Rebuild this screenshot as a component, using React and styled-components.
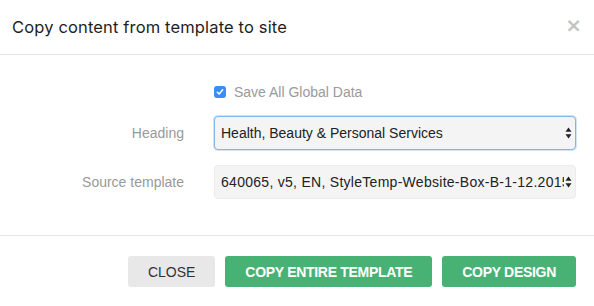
import React from 'react'
import styled, { createGlobalStyle } from 'styled-components'

const GlobalStyle = createGlobalStyle`
  html, body {
    margin: 0;
    padding: 0;
    background: #fff;
  }
  * { box-sizing: border-box; }
`;

const ArrowIcon = () => (
    <svg width="7" height="12" viewBox="0 0 7 12">
        <path d="M3.5 0.5 L6.5 4.8 L0.5 4.8 Z" fill="#222" />
        <path d="M3.5 11.5 L6.5 7.2 L0.5 7.2 Z" fill="#222" />
    </svg>
);

const CheckIcon = () => (
    <svg width="8" height="8" viewBox="0 0 8 8">
        <path d="M1.3 4.2 L3.2 6 L6.7 1.8" stroke="#fff" strokeWidth="1.5" fill="none" strokeLinecap="round" strokeLinejoin="round" />
    </svg>
);

const App = () => {
    return (
        <Modal>
            <GlobalStyle />
            <Header>
                <Title>Copy content from template to site</Title>
                <CloseX>×</CloseX>
            </Header>
            <Body>
                <Row>
                    <span />
                    <CheckRow>
                        <CheckBox><CheckIcon /></CheckBox>
                        <CheckLabel>Save All Global Data</CheckLabel>
                    </CheckRow>
                </Row>
                <Row>
                    <Label>Heading</Label>
                    <SelectWrap>
                        <Select focused defaultValue="h">
                            <option value="h">Health, Beauty &amp; Personal Services</option>
                        </Select>
                        <Arrow><ArrowIcon /></Arrow>
                    </SelectWrap>
                </Row>
                <Row>
                    <Label>Source template</Label>
                    <SelectWrap>
                        <Select wide defaultValue="t">
                            <option value="t">640065, v5, EN, StyleTemp-Website-Box-B-1-12.2015</option>
                        </Select>
                        <Arrow><ArrowIcon /></Arrow>
                    </SelectWrap>
                </Row>
            </Body>
            <Footer>
                <Button>Close</Button>
                <Button primary>Copy entire template</Button>
                <Button primary>Copy design</Button>
            </Footer>
        </Modal>
    )
};

const Modal = styled.div`
    width: 594px;
    height: 306px;
    background: #fff;
    font-family: "Liberation Sans", Arial, sans-serif;
    display: flex;
    flex-direction: column;
`;

const Header = styled.div`
    height: 55px;
    border-bottom: 1px solid #e5e5e5;
    display: flex;
    align-items: center;
    justify-content: space-between;
    padding: 0 12px 1px 12px;
`;

const Title = styled.h4`
    margin: 0;
    font-family: Inter, "Noto Sans", sans-serif;
    font-weight: 400;
    font-size: 16.5px;
    color: #1e1e1e;
    letter-spacing: 0.15px;
`;

const CloseX = styled.span`
    font-family: "DejaVu Sans", sans-serif;
    font-weight: bold;
    font-size: 20px;
    line-height: 1;
    color: #c4c4c4;
    margin-top: -3px;
`;

const Body = styled.div`
    flex: 1;
    padding: 27px 18px 0 0;
    display: flex;
    flex-direction: column;
    gap: 15px;
`;

const Row = styled.div`
    display: grid;
    grid-template-columns: 184px 1fr;
    column-gap: 30px;
    align-items: center;
`;

const Label = styled.label`
    text-align: right;
    font-size: 14px;
    color: #999;
`;

const CheckRow = styled.div`
    display: flex;
    align-items: center;
    gap: 8px;
    height: 20px;
    margin-bottom: -1px;
`;

const CheckBox = styled.span`
    width: 12px;
    height: 12px;
    border-radius: 3px;
    background: #3b8cf4;
    display: flex;
    align-items: center;
    justify-content: center;
`;

const CheckLabel = styled.span`
    font-size: 14px;
    color: #9a9a9a;
`;

const SelectWrap = styled.div`
    position: relative;
    height: 34px;
`;

const Select = styled.select`
    appearance: none;
    -webkit-appearance: none;
    width: 100%;
    height: 34px;
    padding: 0 10px 0 6px;
    font-family: "Liberation Sans", Arial, sans-serif;
    font-size: 14px;
    letter-spacing: ${p => (p.wide ? '0.28px' : '0')};
    color: #222;
    background: #f4f4f4;
    border: 1px solid ${p => (p.focused ? '#7fb6ec' : '#ececec')};
    border-radius: 4px;
    box-shadow: ${p => (p.focused ? '0 0 0 1px rgba(120, 175, 235, 0.35)' : 'none')};
    outline: none;
`;

const Arrow = styled.span`
    position: absolute;
    right: 4px;
    top: 11px;
    padding-left: 1px;
    background: #f4f4f4;
    pointer-events: none;
    display: flex;
`;

const Footer = styled.div`
    height: 71px;
    border-top: 1px solid #e5e5e5;
    display: flex;
    justify-content: flex-end;
    align-items: flex-start;
    gap: 10px;
    padding: 20px 18px 0 0;
`;

const Button = styled.button`
    height: 31px;
    padding: 0 20px;
    border: none;
    border-radius: 3px;
    font-family: "Liberation Sans", Arial, sans-serif;
    font-size: 14px;
    text-transform: uppercase;
    font-weight: ${p => (p.primary ? 'bold' : 'normal')};
    letter-spacing: ${p => (p.primary ? '-0.3px' : '0')};
    background: ${p => (p.primary ? '#48b274' : '#e8e8e8')};
    color: ${p => (p.primary ? '#fff' : '#333')};
    cursor: pointer;
`;

export default App
